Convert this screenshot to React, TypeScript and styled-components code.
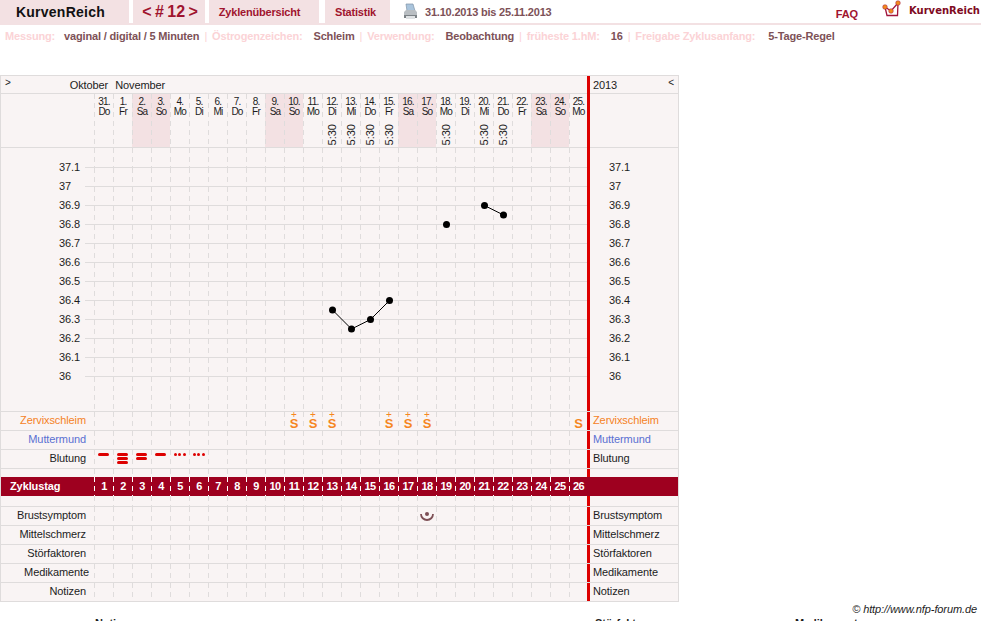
import * as React from 'react';
import styled, { createGlobalStyle } from 'styled-components';

const LINE = '#dfdcdc';
const PANEL = '#f9f4f4';
const ROSE = '#f3e1e3';
const WINE = '#a0142e';
const BROWN = '#7d5157';
const RED = '#dd0000';

const GlobalStyle = createGlobalStyle`
	html, body {
		margin: 0;
		height: 621px;
		overflow: hidden;
		background: #fff;
		font-family: 'Liberation Sans', Arial, sans-serif;
		font-size: 11px;
		letter-spacing: -0.1px;
		color: #1c1c1c;
	}
`;

const TopBar = styled.header`
	display: flex;
	height: 25px;
	box-sizing: border-box;
	border-bottom: 2px solid ${ROSE};
`;

const Tab = styled.div<{ $width: number; $gap: number; $shift?: number }>`
	width: ${(p) => p.$width}px;
	margin-right: ${(p) => p.$gap}px;
	padding-right: ${(p) => p.$shift ?? 0}px;
	box-sizing: border-box;
	background: ${ROSE};
	display: flex;
	align-items: center;
	justify-content: center;
	font-weight: bold;
	letter-spacing: -0.2px;
	color: ${WINE};
`;

const Brand = styled.div`
	font-size: 14px;
	letter-spacing: 0.25px;
	color: #111;
	padding-right: 8px;
`;

const CycleNav = styled.span`
	font-size: 16px;
	letter-spacing: 0;
	word-spacing: -1px;
	padding-left: 2px;
`;

const PrintIcon = styled.svg`
	margin: 3px 7px 0 13px;
`;

const DateRange = styled.div`
	font-weight: bold;
	letter-spacing: -0.2px;
	color: ${BROWN};
	line-height: 25px;
`;

const Faq = styled.a`
	margin-left: auto;
	margin-top: 2px;
	line-height: 25px;
	font-weight: bold;
	color: ${WINE};
`;

const LogoIcon = styled.svg`
	margin: 0 6px 0 23px;
`;

const LogoText = styled.div`
	font-family: 'DejaVu Sans', sans-serif;
	font-size: 10px;
	letter-spacing: 0;
	font-weight: bold;
	line-height: 21px;
	color: #7e0a22;
	margin-right: 1px;
`;

const InfoBar = styled.div`
	display: flex;
	height: 50px;
	padding: 5px 0 0 5px;
	box-sizing: border-box;
	line-height: 13px;
	font-weight: bold;
	letter-spacing: -0.16px;
`;

const InfoLabel = styled.span<{ $gap?: number }>`
	color: #fbd3d6;
	margin-right: ${(p) => p.$gap ?? 11}px;
`;

const InfoValue = styled.span`
	color: ${BROWN};
`;

const InfoSep = styled.span`
	color: #fbd3d6;
	font-weight: normal;
	margin: 0 5px;
`;

const Sheet = styled.div`
	width: 679px;
	box-sizing: border-box;
	border: 1px solid ${LINE};
	border-bottom: 0;
	background: ${PANEL};
`;

const Row = styled.div<{ $height: number; $plain?: boolean }>`
	display: grid;
	grid-template-columns: 93px repeat(25, 19px) 18px 3px 1fr;
	height: ${(p) => p.$height}px;
	box-sizing: border-box;
	border-bottom: ${(p) => (p.$plain ? '0' : `1px solid ${LINE}`)};
`;

const MonthCell = styled.div`
	grid-column: 1 / span 27;
	display: flex;
	line-height: 19px;
`;

const Toggle = styled.span`
	font-size: 10px;
	margin: -3px 0 0 4px;
`;

const Month = styled.span<{ $left: number }>`
	margin-left: ${(p) => p.$left}px;
`;

const YearCell = styled.div`
	display: flex;
	justify-content: space-between;
	line-height: 19px;
	padding: 0 4px 0 3px;
`;

const DayCell = styled.div<{ $weekend?: boolean; $dash?: string }>`
	background-color: ${(p) => (p.$weekend ? ROSE : 'transparent')};
	background-image: repeating-linear-gradient(
		to bottom,
		${(p) => p.$dash ?? LINE} 0 5px,
		transparent 5px 9px
	);
	background-size: 1px 100%;
	background-repeat: no-repeat;
	min-width: 0;
	display: flex;
	flex-direction: column;
	align-items: center;
`;

const DayLabel = styled(DayCell)`
	font-size: 10px;
	letter-spacing: -0.8px;
	line-height: 10px;
	text-align: center;
	padding: 3px 0 2px 1px;
	justify-content: space-between;
`;

const SleepTime = styled.span`
	writing-mode: vertical-rl;
	transform: rotate(180deg);
	font-size: 11px;
	letter-spacing: 0;
	line-height: 11px;
`;

const Divider = styled.div<{ $over?: boolean }>`
	background: ${RED};
	margin-bottom: ${(p) => (p.$over ? '-1px' : '0')};
`;

const ChartBody = styled.div`
	position: relative;
`;

const ChartCell = styled(DayCell)`
	border-bottom: 1px solid ${LINE};
`;

const ChartLabelCell = styled.div`
	display: flex;
	align-items: flex-end;
	padding-left: 58px;
	background: linear-gradient(${LINE}, ${LINE}) right bottom / 9px 1px no-repeat;
`;

const ChartLabelRight = styled(ChartLabelCell)`
	background: none;
	padding-left: 19px;
`;

const Temp = styled.span`
	line-height: 19px;
	margin-bottom: -9px;
`;

const ChartDots = styled.svg`
	position: absolute;
	left: 0;
	top: 0;
	pointer-events: none;
`;

const RowLabel = styled.div<{ $color?: string; $nudge?: number }>`
	text-align: right;
	line-height: 16px;
	padding-right: ${(p) => 8 - (p.$nudge ?? 0)}px;
	color: ${(p) => p.$color ?? 'inherit'};
	white-space: nowrap;
`;

const RowLabelRight = styled.div<{ $color?: string }>`
	line-height: 16px;
	padding-left: 3px;
	color: ${(p) => p.$color ?? 'inherit'};
	white-space: nowrap;
`;

const MucusMark = styled.span`
	color: #f5861f;
	font-weight: bold;
	padding-left: 1px;
	display: flex;
	flex-direction: column;
	align-items: center;
`;

const MucusPlus = styled.span<{ $hidden?: boolean }>`
	font-size: 10px;
	font-weight: normal;
	line-height: 6px;
	height: 6px;
	visibility: ${(p) => (p.$hidden ? 'hidden' : 'visible')};
`;

const MucusLetter = styled.span`
	font-size: 13px;
	line-height: 11px;
	height: 11px;
`;

const BleedStack = styled.div`
	display: flex;
	flex-direction: column;
	gap: 1px;
	padding-top: 3px;
`;

const BleedBar = styled.div`
	width: 11px;
	height: 3px;
	border-radius: 2px;
	background: ${RED};
`;

const SpotRow = styled.div`
	display: flex;
	gap: 1.5px;
	padding-top: 3px;
`;

const Spot = styled.div`
	width: 3px;
	height: 3px;
	border-radius: 50%;
	background: ${RED};
`;

const CycleBar = styled(Row)`
	background: #9e001f;
	color: #fff;
	font-weight: bold;
	line-height: 19px;
`;

const CycleTitle = styled.div`
	padding-left: 9px;
	font-size: 11px;
`;

const CycleDay = styled(DayCell)`
	padding-left: 1px;
	letter-spacing: -0.5px;
`;

const BreastIcon = styled.svg`
	margin: 2px 0 0 1px;
`;

const Credit = styled.div`
	text-align: right;
	font-style: italic;
	padding: 1px 4px 0 0;
	line-height: 13px;
`;

const Columns = styled.div`
	display: grid;
	grid-template-columns: 500px 200px 1fr;
	padding-left: 95px;
	font-weight: bold;
	line-height: 13px;
	margin-top: 1px;
`;

const days: [string, string, string?][] = [
	['31.', 'Do'], ['1.', 'Fr'], ['2.', 'Sa'], ['3.', 'So'], ['4.', 'Mo'], ['5.', 'Di'], ['6.', 'Mi'],
	['7.', 'Do'], ['8.', 'Fr'], ['9.', 'Sa'], ['10.', 'So'], ['11.', 'Mo'], ['12.', 'Di', '5:30'],
	['13.', 'Mi', '5:30'], ['14.', 'Do', '5:30'], ['15.', 'Fr', '5:30'], ['16.', 'Sa'], ['17.', 'So'],
	['18.', 'Mo', '5:30'], ['19.', 'Di'], ['20.', 'Mi', '5:30'], ['21.', 'Do', '5:30'], ['22.', 'Fr'],
	['23.', 'Sa'], ['24.', 'So'], ['25.', 'Mo'],
];

const temps = ['37.1', '37', '36.9', '36.8', '36.7', '36.6', '36.5', '36.4', '36.3', '36.2', '36.1', '36'];

const readings: [number, number][] = [
	[12, 36.35], [13, 36.25], [14, 36.3], [15, 36.4], [18, 36.8], [20, 36.9], [21, 36.85],
];

const mucus: Record<number, boolean> = { 10: true, 11: true, 12: true, 15: true, 16: true, 17: true, 25: false };
const bleeding: Record<number, number> = { 0: 1, 1: 3, 2: 2, 3: 1, 4: 0, 5: 0 };

const range = Array.from({ length: 26 }, (_, i) => i);
const px = (col: number) => 93 + col * 19 + 10.5;
const py = (t: number) => 19.5 + (37.1 - t) * 190;

function Bleeding({ level }: { level: number }) {
	if (level === 0) {
		return (
			<SpotRow>
				<Spot />
				<Spot />
				<Spot />
			</SpotRow>
		);
	}
	return (
		<BleedStack>
			{Array.from({ length: level }, (_, i) => (
				<BleedBar key={i} />
			))}
		</BleedStack>
	);
}

function DataRow({ label, color, nudge, render }: {
	label: string;
	color?: string;
	nudge?: number;
	render?: (col: number) => React.ReactNode;
}) {
	return (
		<Row $height={19}>
			<RowLabel $color={color} $nudge={nudge}>{label}</RowLabel>
			{range.map((i) => (
				<DayCell key={i}>{render?.(i)}</DayCell>
			))}
			<Divider />
			<RowLabelRight $color={color}>{label}</RowLabelRight>
		</Row>
	);
}

function Spacer({ height }: { height: number }) {
	return (
		<Row $height={height} $plain={height === 8}>
			<div />
			{range.map((i) => (
				<DayCell key={i} />
			))}
			<Divider />
			<div />
		</Row>
	);
}

export default function App(): JSX.Element {
	return (
		<>
			<GlobalStyle />
			<TopBar>
				<Tab $width={129} $gap={4}><Brand>KurvenReich</Brand></Tab>
				<Tab $width={72} $gap={4}><CycleNav>&lt; # 12 &gt;</CycleNav></Tab>
				<Tab $width={110} $gap={6} $shift={9}>Zyklenübersicht</Tab>
				<Tab $width={65} $gap={0} $shift={4}>Statistik</Tab>
				<PrintIcon width="15" height="17" viewBox="0 0 15 17">
					<path d="M3 1h7l2 7H4z" fill="#a9c4dc" stroke="#7f93a6" strokeWidth="0.7" />
					<path d="M1 9l2-2h9l2 2v4H1z" fill="#b9bec2" />
					<path d="M1 12h13v3H1z" fill="#7c8286" />
					<path d="M3 13h9v3H3z" fill="#dfe2e4" />
				</PrintIcon>
				<DateRange>31.10.2013 bis 25.11.2013</DateRange>
				<Faq>FAQ</Faq>
				<LogoIcon width="22" height="20" viewBox="0 0 22 20">
					<path d="M4 7l2 8.5h10.5L17 3" fill="none" stroke="#a0143c" strokeWidth="1.3" />
					<path d="M4 7l6 4 7-8" fill="none" stroke="#a0143c" strokeWidth="1.3" />
					<circle cx="4" cy="7" r="2.3" fill="#f28c1e" stroke="#a0143c" strokeWidth="0.5" />
					<circle cx="10" cy="11" r="2.3" fill="#f28c1e" stroke="#a0143c" strokeWidth="0.5" />
					<circle cx="17" cy="3" r="2.3" fill="#f28c1e" stroke="#a0143c" strokeWidth="0.5" />
				</LogoIcon>
				<LogoText>KurvenReich</LogoText>
			</TopBar>
			<InfoBar>
				<InfoLabel $gap={9}>Messung:</InfoLabel>
				<InfoValue>vaginal / digital / 5 Minuten</InfoValue>
				<InfoSep>|</InfoSep>
				<InfoLabel>Östrogenzeichen:</InfoLabel>
				<InfoValue>Schleim</InfoValue>
				<InfoSep>|</InfoSep>
				<InfoLabel>Verwendung:</InfoLabel>
				<InfoValue>Beobachtung</InfoValue>
				<InfoSep>|</InfoSep>
				<InfoLabel>früheste 1.hM:</InfoLabel>
				<InfoValue>16</InfoValue>
				<InfoSep>|</InfoSep>
				<InfoLabel $gap={13}>Freigabe Zyklusanfang:</InfoLabel>
				<InfoValue>5-Tage-Regel</InfoValue>
			</InfoBar>
			<Sheet>
				<Row $height={18}>
					<MonthCell>
						<Toggle>&gt;</Toggle>
						<Month $left={59}>Oktober</Month>
						<Month $left={7}>November</Month>
					</MonthCell>
					<Divider $over />
					<YearCell>
						<span>2013</span>
						<Toggle>&lt;</Toggle>
					</YearCell>
				</Row>
				<Row $height={54}>
					<div />
					{days.map(([date, name, time], i) => (
						<DayLabel key={i} $weekend={name === 'Sa' || name === 'So'}>
							<span>
								{date}
								<br />
								{name}
							</span>
							{time && <SleepTime>{time}</SleepTime>}
						</DayLabel>
					))}
					<Divider $over />
					<div />
				</Row>
				<ChartBody>
					{temps.map((t, r) => (
						<Row key={t} $height={r === 0 ? 20 : 19} $plain>
							<ChartLabelCell><Temp>{t}</Temp></ChartLabelCell>
							{range.map((i) => (
								<ChartCell key={i} />
							))}
							<Divider />
							<ChartLabelRight><Temp>{t}</Temp></ChartLabelRight>
						</Row>
					))}
					<Spacer height={35} />
					<ChartDots width="678" height="264" viewBox="0 0 678 264">
						<polyline
							points={readings.slice(0, 4).map(([c, t]) => `${px(c)},${py(t)}`).join(' ')}
							fill="none"
							stroke="#000"
						/>
						<polyline
							points={readings.slice(5).map(([c, t]) => `${px(c)},${py(t)}`).join(' ')}
							fill="none"
							stroke="#000"
						/>
						{readings.map(([c, t]) => (
							<circle key={c} cx={px(c)} cy={py(t)} r="3.5" fill="#000" />
						))}
					</ChartDots>
				</ChartBody>
				<DataRow
					label="Zervixschleim"
					color="#f5821f"
					render={(i) =>
						i in mucus ? (
							<MucusMark>
								<MucusPlus $hidden={!mucus[i]}>+</MucusPlus>
								<MucusLetter>S</MucusLetter>
							</MucusMark>
						) : null
					}
				/>
				<DataRow label="Muttermund" color="#5a70d2" />
				<DataRow
					label="Blutung"
					render={(i) => (i in bleeding ? <Bleeding level={bleeding[i]} /> : null)}
				/>
				<Spacer height={8} />
				<CycleBar $height={19} $plain>
					<CycleTitle>Zyklustag</CycleTitle>
					{range.map((i) => (
						<CycleDay key={i} $dash="#fff">{i + 1}</CycleDay>
					))}
					<div />
					<div />
				</CycleBar>
				<Spacer height={11} />
				<DataRow
					label="Brustsymptom"
					render={(i) =>
						i === 17 ? (
							<BreastIcon width="14" height="13" viewBox="0 0 14 13">
								<circle cx="7" cy="5" r="2" fill="#7d4f55" />
								<path d="M1 5a6 6 0 0 0 12 0" fill="none" stroke="#7d4f55" strokeWidth="1.8" />
							</BreastIcon>
						) : null
					}
				/>
				<DataRow label="Mittelschmerz" />
				<DataRow label="Störfaktoren" />
				<DataRow label="Medikamente" nudge={3} />
				<DataRow label="Notizen" />
			</Sheet>
			<Credit>© http://www.nfp-forum.de</Credit>
			<Columns>
				<span>Notizen</span>
				<span>Störfaktoren</span>
				<span>Medikamente</span>
			</Columns>
		</>
	);
}
